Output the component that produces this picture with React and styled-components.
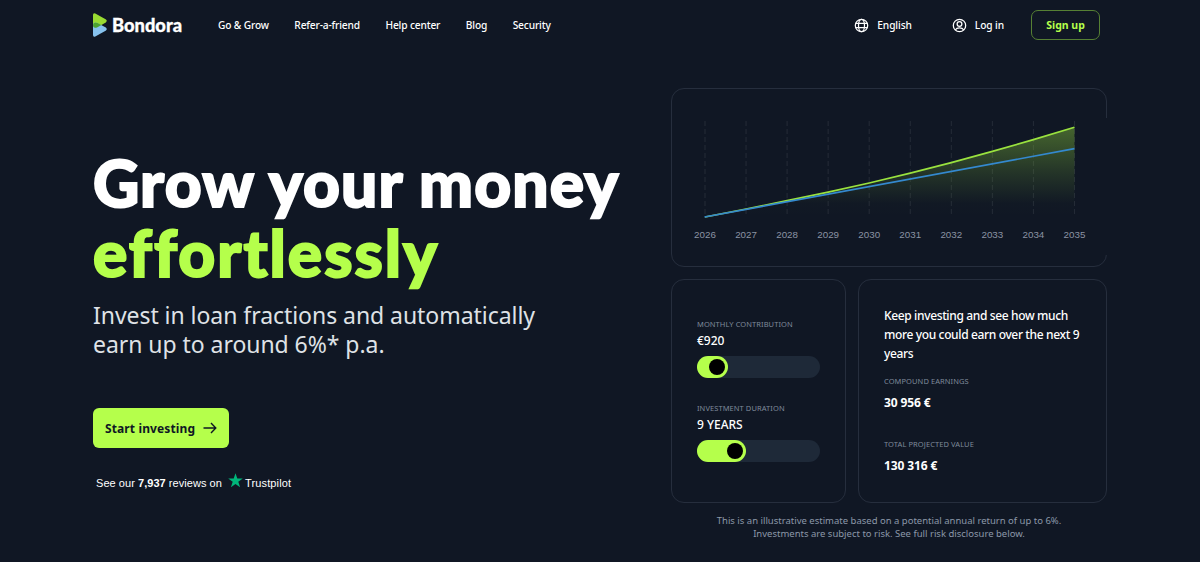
import styled, { createGlobalStyle } from 'styled-components'

const years = [2026, 2027, 2028, 2029, 2030, 2031, 2032, 2033, 2034, 2035]
const compound = [128, 120, 111.7, 103.2, 94, 84.2, 73.6, 62.4, 50.6, 38.3]
const START_X = 33
const STEP = 41.05

const navLinks = ['Go & Grow', 'Refer-a-friend', 'Help center', 'Blog', 'Security']

const sliders = [
  { label: 'Monthly contribution', value: '€920', fill: 31 },
  { label: 'Investment duration', value: '9 YEARS', fill: 49 },
]

const Logo = () => (
  <LogoLink>
    <svg width="15" height="24" viewBox="0 0 15 24">
      <path d="M0 2Q0-.4 2.300.5L12.600 6.200Q14.800 7.700 12.800 9.400L4.500 14.200Q0 16 0 12Z" fill="#99db32" />
      <path d="M0 12Q0 8.500 4.500 9.900L12.800 14.600Q14.800 16.300 12.600 17.800L2.300 23.500Q0 24.400 0 22Z" fill="#86c2ee" />
      <path d="M0 12Q0 8.500 4.500 9.900L8.400 12 4.500 14.200Q0 16 0 12Z" fill="#4da32f" />
    </svg>
    <span>Bondora</span>
  </LogoLink>
)

const GlobeIcon = () => (
  <svg width="15" height="15" viewBox="0 0 15 15" fill="none" stroke="#fff" strokeWidth="1.250">
    <circle cx="7.5" cy="7.5" r="6.2" />
    <ellipse cx="7.5" cy="7.5" rx="3" ry="6.2" />
    <path d="M1.700 5.300h11.600M1.700 9.700h11.600" />
  </svg>
)

const UserIcon = () => (
  <svg width="15" height="15" viewBox="0 0 15 15" fill="none" stroke="#fff" strokeWidth="1.250">
    <circle cx="7.5" cy="7.5" r="6.2" />
    <circle cx="7.5" cy="6" r="2.400" />
    <path d="M3.200 12c1-1.600 2.500-2.200 4.300-2.200s3.300.6 4.300 2.200" />
  </svg>
)

const GrowthChart = () => {
  const points = compound.map((y, i) => `${START_X + i * STEP},${y}`).join(' L')
  const endX = START_X + 9 * STEP
  return (
    <svg width="434" height="177" viewBox="0 0 434 177">
      <defs>
        <linearGradient id="earnings" x1="0" y1="0" x2="0" y2="1">
          <stop offset="0" stopColor="#8fd13c" stopOpacity="0.42" />
          <stop offset="0.5" stopColor="#8fd13c" stopOpacity="0.16" />
          <stop offset="0.85" stopColor="#8fd13c" stopOpacity="0.01" />
          <stop offset="1" stopColor="#8fd13c" stopOpacity="0" />
        </linearGradient>
      </defs>
      {years.map((year, i) => (
        <line
          key={year}
          x1={START_X + i * STEP}
          x2={START_X + i * STEP}
          y1="32"
          y2="128"
          stroke="#fff"
          strokeOpacity="0.09"
          strokeDasharray="5 3"
        />
      ))}
      <path d={`M${points} V128 H${START_X} Z`} fill="url(#earnings)" />
      <path d={`M${points}`} fill="none" stroke="#9ae23f" strokeWidth="1.700" />
      <path d={`M${START_X - 0.5} 128 L${endX} 59.700`} stroke="#3489cf" strokeWidth="1.700" />
      {years.map((year, i) => (
        <YearLabel key={year} x={START_X + i * STEP} y="149">{year}</YearLabel>
      ))}
    </svg>
  )
}

const App = () => {
  return (
    <Page>
      <GlobalStyle />
      <Header>
        <Logo />
        <Nav>
          {navLinks.map((link) => <NavLink key={link}>{link}</NavLink>)}
        </Nav>
        <Account>
          <AccountLink><GlobeIcon />English</AccountLink>
          <AccountLink><UserIcon />Log in</AccountLink>
          <SignUp>Sign up</SignUp>
        </Account>
      </Header>
      <Main>
        <Hero>
          <Title>
            <TitleLine>Grow your money</TitleLine>
            <TitleLine $accent>effortlessly</TitleLine>
          </Title>
          <Subtitle>
            Invest in loan fractions and automatically<br />earn up to around 6%* p.a.
          </Subtitle>
          <Cta>
            Start investing
            <svg width="14" height="12" viewBox="0 0 14 12" fill="none" stroke="#0f1724" strokeWidth="1.400">
              <path d="M.5 6h12M8 1l4.800 5L8 11" />
            </svg>
          </Cta>
          <Reviews>
            <span>See our <b>7,937</b> reviews on</span>
            <svg width="15" height="15" viewBox="0 0 15 15">
              <path d="M7.500.3l1.800 5.200h5.500l-4.500 3.200 1.800 5.500-4.600-3.300-4.600 3.300 1.800-5.500L.2 5.500h5.500z" fill="#00b67a" />
            </svg>
            <Trustpilot>Trustpilot</Trustpilot>
          </Reviews>
        </Hero>
        <Calculator>
          <ChartCard><GrowthChart /></ChartCard>
          <Cards>
            <ControlsCard>
              {sliders.map(({ label, value, fill }) => (
                <Control key={label}>
                  <Label>{label}</Label>
                  <ControlValue>{value}</ControlValue>
                  <Track><Fill style={{ width: fill }}><Knob /></Fill></Track>
                </Control>
              ))}
            </ControlsCard>
            <ResultsCard>
              <ResultsText>Keep investing and see how much more you could earn over the next 9 years</ResultsText>
              <Result>
                <Label>Compound earnings</Label>
                <ResultValue>30 956 €</ResultValue>
              </Result>
              <Result>
                <Label>Total projected value</Label>
                <ResultValue>130 316 €</ResultValue>
              </Result>
            </ResultsCard>
          </Cards>
          <Disclaimer>
            This is an illustrative estimate based on a potential annual return of up to 6%.<br />
            Investments are subject to risk. See full risk disclosure below.
          </Disclaimer>
        </Calculator>
      </Main>
    </Page>
  )
}

export default App

const GlobalStyle = createGlobalStyle`
  * {
    box-sizing: border-box;
  }
  body {
    margin: 0;
    background: #101724;
  }
  svg {
    display: block;
    flex: none;
  }
`
const Page = styled.div`
  width: 1200px;
  height: 562px;
  overflow: hidden;
  background: #101724;
  color: #fff;
  font-family: 'Noto Sans', sans-serif;
`
const Header = styled.header`
  display: flex;
  align-items: center;
  height: 50px;
  padding: 0 100px 0 93px;
`
const LogoLink = styled.a`
  display: flex;
  align-items: center;
  gap: 4px;
  width: 125px;
  font-family: Lato, sans-serif;
  font-size: 18.300px;
  font-weight: 900;
  -webkit-text-stroke: 0.3px;
`
const Nav = styled.nav`
  display: flex;
  gap: 25.500px;
`
const NavLink = styled.a`
  font-size: 10.200px;
  font-weight: 500;
  letter-spacing: -0.15px;
`
const Account = styled.div`
  display: flex;
  align-items: center;
  margin-left: auto;
`
const AccountLink = styled.a`
  display: flex;
  align-items: center;
  gap: 8px;
  margin-right: 40px;
  font-size: 10.200px;
  font-weight: 500;
  letter-spacing: -0.1px;

  & + & {
    margin-right: 27px;
  }
`
const SignUp = styled.button`
  width: 69px;
  height: 30px;
  padding: 0;
  border: 1px solid #568034;
  border-radius: 7px;
  background: none;
  color: #b5ff4b;
  font: 700 10.500px 'Noto Sans', sans-serif;
`
const Main = styled.main`
  display: flex;
  padding: 38px 93px 0;
`
const Hero = styled.section`
  width: 578px;
  padding-top: 60px;
`
const Title = styled.h1`
  margin: 0;
  font-family: Lato, sans-serif;
  font-size: 64px;
  font-weight: 900;
  line-height: 70px;
  -webkit-text-stroke: 2px;
`
const TitleLine = styled.span`
  display: block;
  white-space: nowrap;
  color: ${({ $accent }) => ($accent ? '#b5ff4b' : '#fff')};
  letter-spacing: ${({ $accent }) => ($accent ? '2px' : '1.2px')};
`
const Subtitle = styled.p`
  margin: 13px 0 0;
  color: #dfe2e6;
  font-size: 23px;
  line-height: 28.500px;
  letter-spacing: -0.05px;
`
const Cta = styled.button`
  display: flex;
  align-items: center;
  gap: 8px;
  width: 136px;
  height: 40px;
  margin-top: 50px;
  padding: 0 12px;
  border: 0;
  border-radius: 6px;
  background: #b5ff4b;
  color: #0f1724;
  font: 700 12px 'Noto Sans', sans-serif;
  letter-spacing: 0.12px;
  white-space: nowrap;
`
const Reviews = styled.div`
  display: flex;
  align-items: center;
  margin: 25px 0 0 3px;
  font: 11px/16px 'Liberation Sans', sans-serif;
  letter-spacing: 0.05px;

  svg {
    margin: 0 2px 4px 6px;
  }
`
const Trustpilot = styled.span`
  letter-spacing: 0.15px;
`
const Calculator = styled.section`
  width: 436px;
`
const Card = styled.div`
  border: 1px solid #262e3d;
  border-radius: 13px;
`
// the frame stays open on its right side
const ChartCard = styled(Card)`
  position: relative;
  height: 179px;

  &::after {
    content: '';
    position: absolute;
    top: 29px;
    right: -1px;
    width: 3px;
    height: 137px;
    background: #101724;
  }
`
const YearLabel = styled.text`
  fill: #8b93a3;
  font: 9.800px 'Liberation Sans', sans-serif;
  text-anchor: middle;
`
const Cards = styled.div`
  display: grid;
  grid-template-columns: 175px 249px;
  gap: 12px;
  height: 222px;
  margin-top: 12px;
`
const ControlsCard = styled(Card)`
  display: flex;
  flex-direction: column;
  gap: 25px;
  padding: 39px 25px 0;
`
const Control = styled.div`
  height: 59px;
`
const Label = styled.div`
  color: #7f8a9a;
  font-size: 7.500px;
  line-height: 11px;
  letter-spacing: 0.08px;
  text-transform: uppercase;
`
const ControlValue = styled.div`
  margin: 2px 0 6px;
  font-size: 12px;
  font-weight: 500;
  line-height: 18px;
`
const Track = styled.div`
  height: 22px;
  border-radius: 11px;
  background: #1e2938;
`
const Fill = styled.div`
  display: flex;
  justify-content: flex-end;
  align-items: center;
  height: 22px;
  padding-right: 3px;
  border-radius: 11px;
  background: #b5ff4b;
`
const Knob = styled.div`
  width: 16px;
  height: 16px;
  border-radius: 50%;
  background: #000;
`
const ResultsCard = styled(Card)`
  padding: 26px 20px 0 25px;
`
const ResultsText = styled.p`
  margin: 0 0 12px;
  font-size: 12px;
  font-weight: 500;
  line-height: 19.200px;
  letter-spacing: -0.36px;
`
const Result = styled.div`
  height: 63px;
`
const ResultValue = styled.div`
  margin-top: 7.500px;
  font-size: 12px;
  font-weight: 700;
  line-height: 18px;
  letter-spacing: -0.1px;
`
const Disclaimer = styled.p`
  margin: 14px 0 0;
  color: #8c98a9;
  font-size: 9.500px;
  line-height: 12.500px;
  text-align: center;
`
